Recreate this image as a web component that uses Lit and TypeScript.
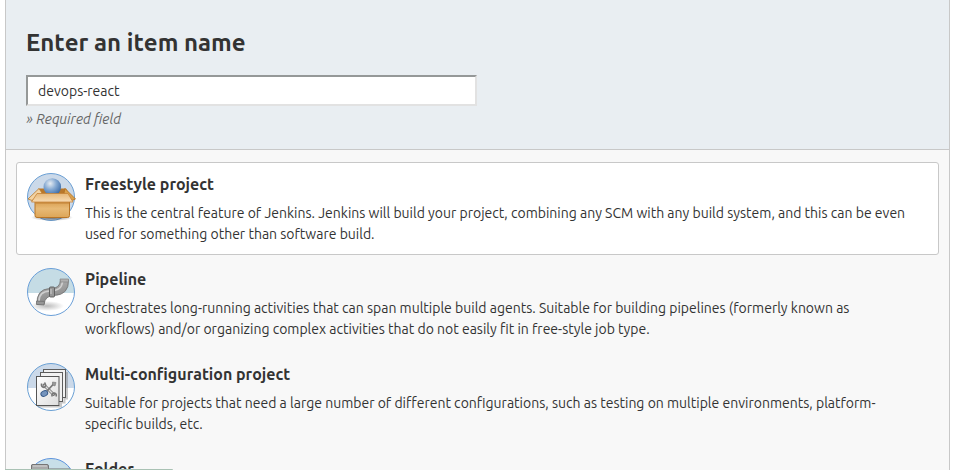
import { LitElement, html, css, svg } from "lit";
import { customElement, property, state } from "lit/decorators.js";
import { classMap } from "lit/directives/class-map.js";

type IconName = "box" | "pipe" | "matrix" | "folder";

interface ItemType {
  id: string;
  title: string;
  text: string;
  icon: IconName;
}

const ITEM_TYPES: ItemType[] = [
  {
    id: "freestyle",
    title: "Freestyle project",
    text: "This is the central feature of Jenkins. Jenkins will build your project, combining any SCM with any build system, and this can be even used for something other than software build.",
    icon: "box",
  },
  {
    id: "pipeline",
    title: "Pipeline",
    text: "Orchestrates long-running activities that can span multiple build agents. Suitable for building pipelines (formerly known as workflows) and/or organizing complex activities that do not easily fit in free-style job type.",
    icon: "pipe",
  },
  {
    id: "matrix",
    title: "Multi-configuration project",
    text: "Suitable for projects that need a large number of different configurations, such as testing on multiple environments, platform-specific builds, etc.",
    icon: "matrix",
  },
  {
    id: "folder",
    title: "Folder",
    text: "",
    icon: "folder",
  },
];

const drawings = {
  box: svg`
    <circle cx="24" cy="24" r="23.5" fill="#cbd9e9" stroke="#6a9fd4"/>
    <ellipse cx="25" cy="44.5" rx="21" ry="3.5" fill="url(#shade)"/>
    <path d="M12 15.500H39L43 22H8Z" fill="#b8782c"/>
    <path d="M12 15.500L1 26L5 27.500L15 20Z" fill="#f3d3a3" stroke="#b8782a" stroke-width=".8"/>
    <path d="M38 15.500L48.500 26L45 27.500L37 20Z" fill="#d9a04c" stroke="#b06f20" stroke-width=".8"/>
    <circle cx="25.300" cy="14" r="8.800" fill="url(#ball)"/>
    <path d="M8 27H42.500V42.500Q42.500 44.500 40.500 44.500H10Q8 44.500 8 42.500Z" fill="url(#card)" stroke="#b87526"/>
    <path d="M10 20.500H41L46 29H4.500Z" fill="url(#flap)" stroke="#c68438" stroke-width=".8"/>
    <path d="M9 30H42" stroke="#b9742a" stroke-width="1.500" opacity=".5"/>
    <defs>
      <radialGradient id="ball" cx=".38" cy=".3" r=".7"><stop offset="0" stop-color="#e6ecf2"/><stop offset=".5" stop-color="#85a9d2"/><stop offset="1" stop-color="#3f6ea9"/></radialGradient>
      <linearGradient id="card" x2="0" y2="1"><stop stop-color="#d69a4a"/><stop offset=".5" stop-color="#e8ba76"/><stop offset="1" stop-color="#dda557"/></linearGradient>
      <linearGradient id="flap" x2="0" y2="1"><stop stop-color="#e6b87a"/><stop offset="1" stop-color="#f8dcb4"/></linearGradient>
      <radialGradient id="shade"><stop stop-color="#444" stop-opacity=".8"/><stop offset="1" stop-color="#444" stop-opacity="0"/></radialGradient>
    </defs>`,
  pipe: svg`
    <clipPath id="disc"><circle cx="24" cy="24" r="23.500"/></clipPath>
    <g clip-path="url(#disc)"><path fill="#fff" d="M0 0H48V48H0Z"/><path fill="#c5dce5" d="M0 0H48V25H0Z"/>
    <ellipse cx="20" cy="38" rx="17" ry="5" fill="url(#floor)"/></g>
    <circle cx="24" cy="24" r="23.500" fill="none" stroke="#6a9fd8"/>
    <path d="M10 36.500Q9 21 23 20.500Q33 21 33.500 12L41.500 12Q42 27 27 27.500Q18 27.500 17 36.500Z" fill="url(#metal)" stroke="#707070" stroke-width=".8"/>
    <path d="M12 33Q12 23.500 23 23Q34.500 23 35.500 14" fill="none" stroke="#cfcfcf" stroke-width="1.600"/>
    <path d="M33 11H41.500V14H33.500Z" fill="#b0b0b0" stroke="#858585" stroke-width=".7"/>
    <path d="M9.500 33L17.500 33.500L17 37L9.500 36.500Z" fill="#959595" stroke="#6c6c6c" stroke-width=".7"/>
    <rect x="22.500" y="19" width="5" height="10" rx="1" fill="#979797" stroke="#5a5a5a" stroke-width=".9"/>
    <path d="M24 21V26" stroke="#d0d0d0"/>
    <defs>
      <linearGradient id="metal" x2=".4" y2="1"><stop stop-color="#bdbdbd"/><stop offset="1" stop-color="#838383"/></linearGradient>
      <radialGradient id="floor"><stop stop-color="#777" stop-opacity=".5"/><stop offset="1" stop-color="#777" stop-opacity="0"/></radialGradient>
    </defs>`,
  matrix: svg`
    <clipPath id="round"><circle cx="24" cy="24" r="23.500"/></clipPath>
    <g clip-path="url(#round)"><path fill="#fff" d="M0 0H48V48H0Z"/><path fill="#cbd9e9" d="M0 0H48V25H0Z"/></g>
    <circle cx="24" cy="24" r="23.500" fill="none" stroke="#6aa0d4"/>
    <path d="M11 43.500H34V39.500H37.500V35.500H40V9" fill="none" stroke="#777" stroke-opacity=".4" stroke-width="2"/>
    <rect x="16.500" y="6.500" width="22" height="28" fill="#f1f1f1" stroke="#5c5c5c"/>
    <rect x="13.500" y="9.500" width="22" height="29" fill="#f1f1f1" stroke="#5c5c5c"/>
    <rect x="9.500" y="13.500" width="22.500" height="29" fill="url(#sheet)" stroke="#555"/>
    <path d="M17 22L26.500 31.500" stroke="#777" stroke-width="3" stroke-linecap="round"/>
    <path d="M17 22L26.500 31.500" stroke="#ddd" stroke-width="1.400"/>
    <path d="M14.500 20.500Q14 24 17 24.500Q20 23 17.500 19.500M25 33.500Q24.500 30 27.500 30Q30 31 29 33.500" fill="none" stroke="#777" stroke-width="1.600"/>
    <path d="M27 20.500L20 28" stroke="#777" stroke-width="1.800"/>
    <path d="M25.500 19L29 19.500L28 23L25.500 22Z" fill="#999" stroke="#777" stroke-width=".6"/>
    <ellipse cx="17.300" cy="30.500" rx="3.500" ry="2.600" transform="rotate(-25 17.300 30.500)" fill="#7594bd" stroke="#355887"/>
    <defs><linearGradient id="sheet" x2="1" y2="1"><stop stop-color="#fff"/><stop offset="1" stop-color="#ddd"/></linearGradient></defs>`,
  folder: svg`
    <circle cx="24" cy="24" r="23.500" fill="#c8dfe8" stroke="#5e94dd"/>
    <path d="M4.500 40V7Q4.500 6.500 6 6.500H20Q21.500 6.500 21.500 8V11H43V40Z" fill="#a9a9a9" stroke="#757575"/>
    <path d="M6 8H20" stroke="#d5d5d5"/>`,
};

@customElement("item-icon")
export class ItemIcon extends LitElement {
  @property() name: IconName = "box";

  static styles = css`
    :host { display: block; width: 48px; height: 48px; }
    .icon { display: block; overflow: visible; }
  `;

  render() {
    return html`<svg class="icon" width="48" height="48" viewBox="0 0 48 48" aria-hidden="true">${drawings[this.name]}</svg>`;
  }
}

@customElement("app-root")
export class AppRoot extends LitElement {
  @state() private selected = "freestyle";

  static styles = css`
    :host {
      display: block;
      height: 100vh;
      overflow: hidden;
      background: #fff;
      color: #333;
      font: 14px/21px Ubuntu, "Noto Sans", sans-serif;
      font-kerning: none;
    }
    * { box-sizing: border-box; }
    .panel {
      margin: 0 10px 0 5px;
      border: 1px solid #c8c8c8;
      border-top: 0;
      background: #f8f8f8;
    }
    .header {
      padding: 28px 20px 19px;
      border-bottom: 1px solid #c8c8c8;
      background: #e9eef2;
    }
    .heading { display: block; font-size: 24px; line-height: 30px; font-weight: 700; }
    .name {
      display: block;
      width: 100%;
      max-width: 451px;
      height: 31px;
      margin: 17px 0 3px;
      padding: 0 10px;
      border: 2px solid;
      border-color: #959898 #e2e2e2 #e2e2e2 #959898;
      background: #fff;
      color: #333;
      font: inherit;
      font-kerning: inherit;
      outline: 0;
    }
    .hint { margin: 0; color: #666; font-style: italic; }
    .types { margin: 0; padding: 12px 10px; border: 0; }
    .type {
      display: flex;
      gap: 10px;
      margin-bottom: 2px;
      padding: 10px 20px 9px 10px;
      border: 1px solid transparent;
      border-radius: 3px;
      cursor: pointer;
    }
    .type.active { border-color: #c8c8c8; background: #fff; }
    .radio { position: absolute; opacity: 0; pointer-events: none; }
    .icon { flex: none; }
    .title { display: block; margin-bottom: 8px; font-size: 16px; line-height: 22px; font-weight: 700; }
    .text { display: block; }
    .status {
      position: fixed;
      left: 5px;
      bottom: 0;
      width: 168px;
      height: 1px;
      border-top-right-radius: 2px;
      background: #a9c2b4;
    }
  `;

  render() {
    return html`
      <main class="panel">
        <header class="header">
          <label class="heading" for="name">Enter an item name</label>
          <input class="name" id="name" type="text" value="devops-react" aria-describedby="hint" />
          <p class="hint" id="hint">» Required field</p>
        </header>
        <fieldset class="types" aria-label="Item type">
          ${ITEM_TYPES.map(
            (item) => html`
              <label class=${classMap({ type: true, active: item.id === this.selected })}>
                <input class="radio" type="radio" name="mode" .value=${item.id}
                  .checked=${item.id === this.selected}
                  @change=${() => (this.selected = item.id)} />
                <item-icon class="icon" .name=${item.icon}></item-icon>
                <span class="body">
                  <span class="title">${item.title}</span>
                  <span class="text">${item.text}</span>
                </span>
              </label>`
          )}
        </fieldset>
      </main>
      <div class="status"></div>
    `;
  }
}
